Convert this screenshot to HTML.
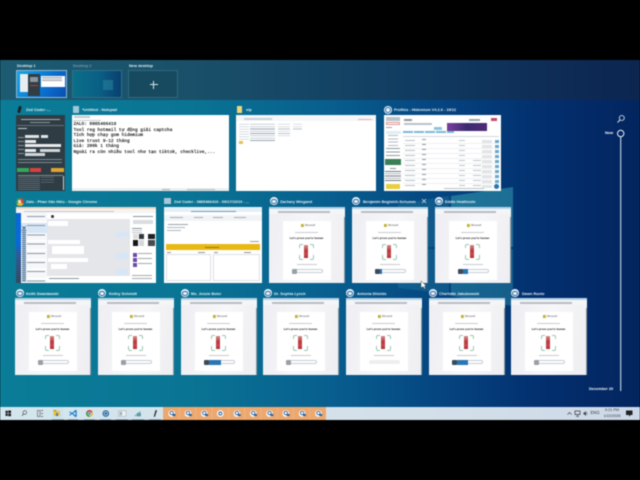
<!DOCTYPE html>
<html><head><meta charset="utf-8"><style>
html,body{margin:0;padding:0;background:#000;width:640px;height:480px;overflow:hidden}
#s{position:absolute;left:0;top:0;width:640px;height:480px;overflow:hidden;filter:blur(.4px);font-family:"Liberation Sans",sans-serif}
div,span,svg{position:absolute;display:block}
.l{color:#f0f8fb;font-size:3.900px;line-height:7px;white-space:nowrap;font-weight:bold;opacity:.95}
.t{background:#fff;overflow:hidden}
.ic{width:8px;height:8px;border-radius:50%;background:#eaf2f8}
.ic:after{content:"";position:absolute;left:1.300px;top:1.300px;width:3.800px;height:3.800px;border:.8px solid #27679f;border-radius:50%}
.bar{left:0;top:0;width:76px;height:2px;background:#b5d3e8}
.tb{left:0;top:2px;width:76px;height:5px;background:#f3f5f7;border-bottom:.5px solid #ddd}
.url{left:9px;top:3.500px;width:52px;height:2px;background:#b9bcc2}
.bg{left:0;top:7px;width:76px;height:70px;background:linear-gradient(100deg,#eeeef3,#f7f7f9 50%,#eeeef2)}
.sb{left:74.500px;top:10px;width:1.500px;height:67px;background:#8f9aa0}
.cd{left:13.500px;top:13.500px;width:48px;height:59px;background:#fff}
.ms{left:18px;top:3px;width:3.500px;height:3.500px;background:linear-gradient(90deg,#a2b838 50%,#e2b23a 50%)}
.mst{left:22.500px;top:3px;font-size:2.500px;line-height:3.500px;color:#555;white-space:nowrap}
.sub{left:12px;top:11.500px;width:23px;height:1px;background:#c9ccd0}
.h{left:0;width:48px;top:15px;text-align:center;font-size:2.800px;line-height:5px;color:#222;white-space:nowrap;font-weight:bold}
.f{left:16px;top:23px;width:15.500px;height:16px;border:1px solid #9cc9b2;border-radius:2px;box-sizing:border-box}
.f:before{content:"";position:absolute;left:3.500px;top:-1px;width:6.500px;height:16px;background:#fff}
.f:after{content:"";position:absolute;left:-1px;top:3.500px;width:15.500px;height:7px;background:#fff}
.fg{left:21.500px;top:24px;width:3.500px;height:13px;background:linear-gradient(#d88a8a,#b53a3f 45%,#c9484b 70%,#a33)}
.li{left:14px;top:43.500px;width:20px;height:1px;background:#c8cbd0}
.btn{left:9px;top:48px;width:31px;height:4.500px;border:.5px solid #c3cdd6;border-radius:3px;box-sizing:border-box;background:#fff}
.bi{left:-.5px;top:-.5px;width:5px;height:5px;background:#9a9fa5;border-radius:1px}
.bb{left:4px;top:-.5px;width:12px;height:4.500px;background:#2a76b5}
</style></head><body><div id="s">
<div style="left:0;top:60px;width:640px;height:360px;background:linear-gradient(90deg,#0a7d98 0%,#0a7494 30%,#085e8e 52%,#05437f 70%,#032f6e 85%,#03255e 100%)"></div>
<svg style="left:0;top:60px" width="640" height="360">
<polygon points="398,144 449,136 449,187 398,187" fill="#37a9b4" opacity=".2"/>
<polygon points="451,136 513,127 513,187 451,187" fill="#43bcc0" opacity=".42"/>
<polygon points="398,189 449,189 449,234 398,228" fill="#37a9b4" opacity=".2"/>
<polygon points="451,189 513,189 513,246 451,236" fill="#43bcc0" opacity=".3"/>
</svg>
<div style="left:0;top:60px;width:640px;height:40px;background:linear-gradient(90deg,#1c5c73 0%,#1a5069 30%,#123f63 60%,#0e2d57 85%,#0c2650 100%)"></div>

<!-- virtual desktops -->
<div class="l" style="left:17px;top:62px">Desktop 1</div>
<div class="l" style="left:73px;top:62px;opacity:.4">Desktop 2</div>
<div class="l" style="left:129px;top:62px">New desktop</div>
<div style="left:15.500px;top:69.500px;width:51px;height:28.500px;box-sizing:border-box;border:1px solid #8fb8d2;background:linear-gradient(120deg,#15a5e8,#0a6fd0 60%,#0a4eb0);overflow:hidden">
 <div style="left:3px;top:3px;width:19px;height:18px;background:#e8eef0"></div>
 <div style="left:24px;top:5px;width:24px;height:11px;background:#fff"></div>
 <div style="left:25px;top:6px;width:20px;height:4px;background:repeating-linear-gradient(#888 0 .5px,#fff .5px 1.200px)"></div>
 <div style="left:11px;top:3px;width:12px;height:22px;background:#2f3d45"></div>
 <div style="left:13px;top:14px;width:8px;height:1.500px;background:#b8403a"></div>
 <div style="left:13px;top:6px;width:8px;height:5px;background:#8c969c"></div>
</div>
<div style="left:72px;top:70px;width:50px;height:28px;box-sizing:border-box;border:.5px solid #2f6f88;background:linear-gradient(90deg,#0a6f88,#0a5f86 55%,#0a3f70)">
 <div style="left:30px;top:9px;width:10px;height:10px;background:#2a8aa0;opacity:.5"></div>
</div>
<div style="left:128px;top:70px;width:50px;height:28px;box-sizing:border-box;border:.5px solid #2e6a80;background:#174a5f">
 <div style="left:20.500px;top:13px;width:8px;height:1px;background:#d8e4e8"></div>
 <div style="left:24px;top:9.500px;width:1px;height:8px;background:#d8e4e8"></div>
</div>

<!-- ROW 1 labels -->
<div style="left:18px;top:106px;width:3px;height:7px;background:#222;transform:rotate(15deg);border-radius:1px"></div>
<div class="l" style="left:26px;top:106px">Zed Coder -...</div>
<div style="left:73px;top:106px;width:6px;height:6.500px;background:#9cc8d8"></div>
<div class="l" style="left:82px;top:106px">*Untitled - Notepad</div>
<div style="left:237px;top:106px;width:5px;height:6.500px;background:#f2d77a"></div>
<div class="l" style="left:246px;top:106px">vip</div>
<div class="ic" style="left:384px;top:105.500px"></div>
<div class="l" style="left:394px;top:106px">Profiles - Hidemium V4.2.6 - 19/12</div>

<!-- Zed coder dark -->
<div class="t" style="left:16px;top:115px;width:49px;height:76px;background:#2f3c44">
 <div style="left:5px;top:4px;width:39px;height:1px;background:#aab2b6"></div>
 <div style="left:14px;top:7px;width:20px;height:1px;background:#8d979c"></div>
 <div style="left:1px;top:10px;width:47px;height:.5px;background:#66727a"></div>
 <div style="left:2px;top:13px;width:9px;height:1px;background:#c4cace"></div>
 <div style="left:9px;top:20px;width:14px;height:3px;background:#dfe3e5"></div><div style="left:25px;top:20px;width:7px;height:3px;background:#dfe3e5"></div>
 <div style="left:9px;top:25px;width:11px;height:2.500px;background:#e8ecee"></div>
 <div style="left:9px;top:29px;width:36px;height:2.500px;background:#e8ecee"></div>
 <div style="left:9px;top:34px;width:11px;height:2.500px;background:#e8ecee"></div><div style="left:24px;top:34px;width:20px;height:2.500px;background:#d2d7da"></div>
 <div style="left:9px;top:38px;width:20px;height:2.500px;background:#d2d7da"></div>
 <div style="left:2px;top:22px;width:6px;height:18px;background:repeating-linear-gradient(#8a9499 0 1px,transparent 1px 4px)"></div>
 <div style="left:2px;top:44px;width:44px;height:5px;background:repeating-linear-gradient(#7f8a90 0 1px,transparent 1px 3px)"></div>
 <div style="left:1px;top:53px;width:12px;height:4px;background:#35a85a"></div>
 <div style="left:14px;top:53px;width:11px;height:4px;background:#d8413f"></div>
 <div style="left:35px;top:53px;width:13px;height:4px;background:#e0a52e"></div>
 <div style="left:2px;top:60px;width:45px;height:.5px;background:#7f8a90"></div>
 <div style="left:2px;top:62px;width:22px;height:13px;background:repeating-linear-gradient(#8b959b 0 .7px,transparent .7px 2px)"></div>
 <div style="left:25px;top:62px;width:13px;height:6px;background:repeating-linear-gradient(#7b858b 0 .7px,transparent .7px 2.500px)"></div>
 <div style="left:46.500px;top:61px;width:1.500px;height:14px;background:#cdd3d6"></div>
</div>

<!-- Notepad -->
<div class="t" style="left:72px;top:115px;width:157px;height:76px">
 <div style="left:2px;top:1px;width:16px;height:1.500px;background:#c3c8cc"></div>
 <div style="left:1px;top:4.500px;width:28px;height:1px;background:#c8ccd0"></div>
 <div style="left:1.500px;top:7.300px;font:4.470px/5.450px 'Liberation Mono','DejaVu Sans Mono',monospace;color:#000;-webkit-text-stroke:.12px #000;white-space:pre">ZALO: 0865466419
Tool reg hotmail tự động giải captcha
Tích hợp chạy gom hidemium
Live trust 9-12 tháng
Giá: 200k 1 tháng
Ngoài ra còn nhiều tool như tạo tiktok, checklive,...</div>
 <div style="left:0;top:72.500px;width:157px;height:3.500px;background:#f0f0f0"></div>
 <div style="left:90px;top:73.500px;width:8px;height:1.200px;background:#a9adb1"></div>
 <div style="left:115px;top:73.500px;width:28px;height:1.200px;background:#b5b9bd"></div>
</div>

<!-- Explorer -->
<div class="t" style="left:236px;top:115px;width:140px;height:76px">
 <div style="left:0;top:0;width:140px;height:6px;background:#f4f6f8"></div>
 <div style="left:8px;top:3px;width:28px;height:2px;background:#cad2da"></div>
 <div style="left:122px;top:4px;width:14px;height:1.200px;background:#e4b4b0"></div>
 <div style="left:3px;top:9px;width:10px;height:16px;background:repeating-linear-gradient(#b5c0c9 0 .7px,transparent .7px 2.500px)"></div>
 <div style="left:3px;top:26px;width:4px;height:3px;background:#e4c15a"></div>
 <div style="left:14px;top:9px;width:25px;height:17px;background:repeating-linear-gradient(#9aa8b3 0 .7px,transparent .7px 2.300px)"></div>
 <div style="left:42px;top:9px;width:12px;height:14px;background:repeating-linear-gradient(#bcc5cc 0 .7px,transparent .7px 2.300px)"></div>
 <div style="left:57px;top:9px;width:9px;height:6px;background:repeating-linear-gradient(#bcc5cc 0 .7px,transparent .7px 2.300px)"></div>
</div>

<!-- Hidemium -->
<div class="t" style="left:384px;top:115px;width:117px;height:76px">
 <div style="left:2px;top:2px;width:14px;height:4px;background:#b9c3ca"></div>
 <div style="left:2px;top:7px;width:14px;height:3px;border:.5px solid #d99;box-sizing:border-box"></div>
 <div style="left:2px;top:12px;width:6px;height:1px;background:#9aa7af"></div>
 <div style="left:2px;top:16px;width:15px;height:3px;background:#e0eef4"></div>
 <div style="left:4px;top:20px;width:10px;height:12px;background:repeating-linear-gradient(#b4bdc3 0 1px,transparent 1px 3.300px)"></div>
 <div style="left:2px;top:33px;width:14px;height:10px;background:repeating-linear-gradient(#8f9ca3 0 1px,transparent 1px 3.500px)"></div>
 <div style="left:1px;top:44px;width:16px;height:6px;background:#3a7f58"></div>
 <div style="left:6px;top:53px;width:6px;height:1px;background:#8a969d"></div>
 <div style="left:1px;top:56px;width:16px;height:11px;background:repeating-linear-gradient(#6f7c84 0 .8px,transparent .8px 2.300px)"></div>
 <div style="left:2px;top:69px;width:14px;height:5px;background:#e8cf3f"></div>
 <div style="left:20px;top:4px;width:8px;height:2px;background:#8d99a0"></div>
 <div style="left:20px;top:8px;width:28px;height:1.500px;background:#b8c2c8"></div>
 <div style="left:63px;top:8px;width:40px;height:8px;background:linear-gradient(90deg,#7a3fa0,#3b2a6e 50%,#4f2a78)"></div>
 <div style="left:85px;top:4px;width:11px;height:1.500px;background:#9ca7ad"></div>
 <div style="left:107px;top:3px;width:6px;height:3px;background:#c44b6a"></div>
 <div style="left:50px;top:12px;width:8px;height:2.500px;background:#8cc5e0"></div>
 <div style="left:19px;top:15.500px;width:51px;height:2.500px;background:repeating-linear-gradient(90deg,#7fb8d8 0 10px,#fff 10px 11px)"></div>
 <div style="left:19px;top:21px;width:96px;height:1px;background:#d4d9dd"></div>
 <div style="left:19px;top:24px;width:96px;height:49px;background:repeating-linear-gradient(#fff 0 4px,#eef0f2 4px 5px)"></div>
 <div style="left:21px;top:25px;width:10px;height:48px;background:repeating-linear-gradient(#b8c1c6 0 .8px,transparent .8px 5px)"></div>
 <div style="left:38px;top:24px;width:4px;height:50px;background:repeating-linear-gradient(#8f9da5 0 1.200px,transparent 1.200px 5px)"></div>
 <div style="left:75px;top:25px;width:6px;height:48px;background:repeating-linear-gradient(#bdc6cb 0 .8px,transparent .8px 5px)"></div>
 <div style="left:89px;top:45px;width:8px;height:28px;background:repeating-linear-gradient(#bdc6cb 0 .8px,transparent .8px 5px)"></div>
 <div style="left:98px;top:25px;width:10px;height:48px;background:repeating-linear-gradient(#e2e4e6 0 3px,transparent 3px 5px)"></div>
 <div style="left:111px;top:25px;width:4px;height:48px;background:repeating-linear-gradient(#6ba8cc 0 3px,transparent 3px 5px)"></div>
 <div style="left:60px;top:72.500px;width:40px;height:1px;background:#b8c0c5"></div>
 <div style="left:110px;top:69px;width:5px;height:5px;border-radius:50%;background:#2a76b5"></div>
</div>

<!-- ROW 2 labels -->
<div style="left:15.500px;top:197.500px;width:8px;height:8px;border-radius:50%;background:conic-gradient(#d9453a 0 33%,#e9b92c 33% 66%,#3c9a53 66%)"></div>
<div style="left:17.800px;top:199.800px;width:3.400px;height:3.400px;border-radius:50%;background:#4a8fd8;border:.4px solid #fff;box-sizing:border-box"></div>
<div class="l" style="left:26px;top:198px">Zalo - Phan Văn Hiếu - Google Chrome</div>
<div style="left:164px;top:198px;width:6.500px;height:6px;background:#a7c8d6"></div>
<div class="l" style="left:174px;top:198px">Zed Coder - 0865466419 - 09/17/10/10 - ...</div>
<div class="ic" style="left:269.500px;top:197.300px"></div><div class="l" style="left:280px;top:198px">Zachary Wiegand</div>
<div class="ic" style="left:352px;top:197.300px"></div><div class="l" style="left:363px;top:198px">Benjamin Bogisich-Schumm</div>
<div class="ic" style="left:435px;top:197.300px"></div><div class="l" style="left:445px;top:198px">Eddie Heathcote</div>
<svg style="left:421px;top:198px" width="6" height="6"><path d="M1 1 L5 5 M5 1 L1 5" stroke="#dfe9ef" stroke-width=".7"/></svg>

<!-- Zalo chrome -->
<div class="t" style="left:16px;top:207px;width:140px;height:76px">
 <div style="left:0;top:0;width:140px;height:2px;background:#ecd9c7"></div>
 <div style="left:0;top:2px;width:140px;height:4px;background:#f4f4f4"></div>
 <div style="left:8px;top:3.500px;width:90px;height:1.500px;background:#c4c7cb"></div>
 <div style="left:0;top:6px;width:5px;height:70px;background:linear-gradient(#0a68d8 0,#0a68d8 45%,#2e5b9a 60%,#34495e 100%)"></div>
 <div style="left:5px;top:6px;width:26px;height:70px;background:repeating-linear-gradient(#f5f7f9 0 8px,#fff 8px 9.500px)"></div>
 <div style="left:5px;top:16px;width:26px;height:10px;background:#d6e6f6"></div>
 <div style="left:6px;top:19px;width:4px;height:56px;background:repeating-radial-gradient(circle at 2px 2px,#5a7fa5 0 1.500px,#fff 1.500px 2px)"></div>
 <div style="left:11px;top:9px;width:18px;height:66px;background:repeating-linear-gradient(#8b98a5 0 1px,transparent 1px 9.200px)"></div>
 <div style="left:31px;top:6px;width:83px;height:70px;background:#e4e6e9"></div>
 <div style="left:31px;top:6px;width:83px;height:6px;background:#fff"></div>
 <div style="left:35px;top:7.500px;width:3px;height:3px;background:#333;border-radius:50%"></div>
 <div style="left:32px;top:14px;width:20px;height:5px;background:#fff"></div>
 <div style="left:32px;top:33px;width:32px;height:4px;background:#fff"></div>
 <div style="left:36px;top:39px;width:32px;height:8px;background:#fff"></div>
 <div style="left:32px;top:51px;width:40px;height:4px;background:#fff"></div>
 <div style="left:35px;top:57px;width:16px;height:5px;background:#fff"></div>
 <div style="left:100px;top:25px;width:13px;height:5px;background:#d7e6f7"></div>
 <div style="left:100px;top:46px;width:12px;height:6px;background:#d7e6f7"></div>
 <div style="left:100px;top:62px;width:12px;height:6px;background:#d7e6f7"></div>
 <div style="left:31px;top:69px;width:83px;height:7px;background:#fff"></div>
 <div style="left:33px;top:70.500px;width:30px;height:1px;background:#8d959c"></div>
 <div style="left:114px;top:6px;width:26px;height:70px;background:#fff"></div>
 <div style="left:117px;top:9px;width:20px;height:1px;background:#8d959c"></div>
 <div style="left:117px;top:13px;width:20px;height:4px;background:#d9dde0"></div>
 <div style="left:116px;top:21px;width:10px;height:5px;background:repeating-linear-gradient(#8b949b 0 .8px,transparent .8px 2.300px)"></div>
 <div style="left:117px;top:27px;width:5px;height:5px;background:#ddd"></div><div style="left:123px;top:27px;width:5px;height:5px;background:#30373d"></div><div style="left:132px;top:27px;width:7px;height:5px;background:#1d2226"></div>
 <div style="left:117px;top:33px;width:5px;height:6px;background:#151515"></div><div style="left:123px;top:33px;width:5px;height:6px;background:#d4d8db"></div><div style="left:132px;top:33px;width:7px;height:6px;background:#454b50"></div>
 <div style="left:117px;top:46px;width:4px;height:4px;background:#6d4aa8"></div>
 <div style="left:117px;top:51px;width:4px;height:4px;background:#6d4aa8"></div>
 <div style="left:117px;top:56px;width:4px;height:4px;background:#6d4aa8"></div>
 <div style="left:122px;top:46px;width:14px;height:14px;background:repeating-linear-gradient(#a4abb1 0 1px,transparent 1px 5px)"></div>
 <div style="left:116px;top:68px;width:20px;height:5px;background:repeating-linear-gradient(#a4abb1 0 1px,transparent 1px 3px)"></div>
</div>

<!-- Zed 2 -->
<div class="t" style="left:164px;top:207px;width:98px;height:76px">
 <div style="left:0;top:0;width:98px;height:5px;background:#e3f0f8"></div>
 <div style="left:27px;top:4px;width:45px;height:1px;background:#6d9ab8"></div>
 <div style="left:0;top:8px;width:98px;height:6px;background:#f1f4f6"></div>
 <div style="left:6px;top:10px;width:13px;height:1px;background:#a5adb3"></div>
 <div style="left:30px;top:10px;width:9px;height:1px;background:#a5adb3"></div>
 <div style="left:49px;top:10px;width:10px;height:1px;background:#a5adb3"></div>
 <div style="left:70px;top:10px;width:12px;height:1px;background:#a5adb3"></div>
 <div style="left:4px;top:17px;width:20px;height:1px;background:#9aa3a9"></div>
 <div style="left:3px;top:20px;width:18px;height:1px;background:#b2b9be"></div>
 <div style="left:3px;top:23px;width:14px;height:1px;background:#b2b9be"></div>
 <div style="left:86px;top:34px;width:9px;height:1px;background:#99a1a7"></div>
 <div style="left:2px;top:37px;width:94px;height:5.500px;background:#e9b812"></div>
 <div style="left:41px;top:39.500px;width:14px;height:1px;background:#8f7a2a"></div>
 <div style="left:2px;top:47px;width:45px;height:27px;border:.5px solid #dde1e4;box-sizing:border-box"></div>
 <div style="left:49px;top:47px;width:47px;height:27px;border:.5px solid #dde1e4;box-sizing:border-box"></div>
 <div style="left:3px;top:45px;width:4px;height:1px;background:#8d959b"></div>
 <div style="left:34px;top:45px;width:7px;height:1px;background:#8d959b"></div>
 <div style="left:50px;top:45px;width:4px;height:1px;background:#8d959b"></div>
 <div style="left:80px;top:45px;width:7px;height:1px;background:#8d959b"></div>
</div>

<!-- Microsoft thumbs -->
<div class="t" style="left:269px;top:207px;width:76px;height:76px"><div class="bar"></div><div class="tb"></div><div class="url"></div><div class="bg"></div><div class="sb"></div><div class="cd"><div class="ms"></div><div class="mst">Microsoft</div><div class="sub"></div><div class="h">Let's prove you're human</div><div class="f"></div><div class="fg"></div><div class="li"></div><div class="btn"><div class="bi"></div></div></div></div>
<div class="t" style="left:352px;top:207px;width:76px;height:76px"><div class="bar"></div><div class="tb"></div><div class="url"></div><div class="bg"></div><div class="sb"></div><div class="cd"><div class="ms"></div><div class="mst">Microsoft</div><div class="sub"></div><div class="h">Let's prove you're human</div><div class="f"></div><div class="fg"></div><div class="li"></div><div class="btn"><div class="bi" style="background:#3a4a58"></div><div class="bb" style="width:2px"></div></div></div></div>
<div class="t" style="left:435px;top:207px;width:76px;height:76px"><div class="bar"></div><div class="tb"></div><div class="url"></div><div class="bg"></div><div class="sb"></div><div class="cd"><div class="ms"></div><div class="mst">Microsoft</div><div class="sub"></div><div class="h">Let's prove you're human</div><div class="f"></div><div class="fg"></div><div class="li"></div><div class="btn"><div class="bi" style="background:#3a4a58"></div><div class="bb" style="width:5px"></div></div></div></div>

<!-- ROW 3 labels -->
<div class="ic" style="left:15.500px;top:289.300px"></div><div class="l" style="left:26px;top:289.800px">Keith Swaniawski</div>
<div class="ic" style="left:98px;top:289.300px"></div><div class="l" style="left:109px;top:289.800px">Kelley Schmidt</div>
<div class="ic" style="left:181px;top:289.300px"></div><div class="l" style="left:191px;top:289.800px">Ms. Jessie Beier</div>
<div class="ic" style="left:263.500px;top:289.300px"></div><div class="l" style="left:274px;top:289.800px">Dr. Sophia Lynch</div>
<div class="ic" style="left:346px;top:289.300px"></div><div class="l" style="left:357px;top:289.800px">Antonia Shields</div>
<div class="ic" style="left:429px;top:289.300px"></div><div class="l" style="left:439px;top:289.800px">Charlotte Jakubowski</div>
<div class="ic" style="left:511px;top:289.300px"></div><div class="l" style="left:522px;top:289.800px">Dawn Runte</div>

<div class="t" style="left:15px;top:298px;width:76px;height:77px"><div class="bar"></div><div class="tb"></div><div class="url"></div><div class="bg"></div><div class="sb"></div><div class="cd"><div class="ms"></div><div class="mst">Microsoft</div><div class="sub"></div><div class="h">Let's prove you're human</div><div class="f"></div><div class="fg"></div><div class="li"></div><div class="btn"><div class="bi"></div></div></div></div>
<div class="t" style="left:98px;top:298px;width:76px;height:77px"><div class="bar"></div><div class="tb"></div><div class="url"></div><div class="bg"></div><div class="sb"></div><div class="cd"><div class="ms"></div><div class="mst">Microsoft</div><div class="sub"></div><div class="h">Let's prove you're human</div><div class="f"></div><div class="fg"></div><div class="li"></div><div class="btn"><div class="bi"></div></div></div></div>
<div class="t" style="left:181px;top:298px;width:76px;height:77px"><div class="bar"></div><div class="tb"></div><div class="url"></div><div class="bg"></div><div class="sb"></div><div class="cd"><div class="ms"></div><div class="mst">Microsoft</div><div class="sub"></div><div class="h">Let's prove you're human</div><div class="f"></div><div class="fg"></div><div class="li"></div><div class="btn"><div class="bi" style="background:#3a4a58"></div><div class="bb"></div></div></div></div>
<div class="t" style="left:263px;top:298px;width:76px;height:77px"><div class="bar"></div><div class="tb"></div><div class="url"></div><div class="bg"></div><div class="sb"></div><div class="cd"><div class="ms"></div><div class="mst">Microsoft</div><div class="sub"></div><div class="h">Let's prove you're human</div><div class="f"></div><div class="fg"></div><div class="li"></div><div class="btn"><div class="bi"></div></div></div></div>
<div class="t" style="left:346px;top:298px;width:76px;height:77px"><div class="bar"></div><div class="tb"></div><div class="url"></div><div class="bg"></div><div class="sb"></div><div class="cd"><div class="ms"></div><div class="mst">Microsoft</div><div class="sub"></div><div class="h">Let's prove you're human</div><div class="f"></div><div class="fg"></div><div class="li"></div><div class="btn" style="background:#eee;border-color:#eee"></div></div></div>
<div class="t" style="left:429px;top:298px;width:76px;height:77px"><div class="bar"></div><div class="tb"></div><div class="url"></div><div class="bg"></div><div class="sb"></div><div class="cd"><div class="ms"></div><div class="mst">Microsoft</div><div class="sub"></div><div class="h">Let's prove you're human</div><div class="f"></div><div class="fg"></div><div class="li"></div><div class="btn"><div class="bi" style="background:#3a4a58"></div><div class="bb" style="width:11px"></div></div></div></div>
<div class="t" style="left:511px;top:298px;width:76px;height:77px"><div class="bar"></div><div class="tb"></div><div class="url"></div><div class="bg"></div><div class="sb"></div><div class="cd"><div class="ms"></div><div class="mst">Microsoft</div><div class="sub"></div><div class="h">Let's prove you're human</div><div class="f"></div><div class="fg"></div><div class="li"></div><div class="btn"><div class="bi"></div></div></div></div>

<!-- cursor -->
<svg style="left:420px;top:280px" width="8" height="10"><path d="M1 1 L1 8 L3 6.500 L4.500 9 L5.500 8.500 L4.500 6 L6.500 6 Z" fill="#fff" stroke="#222" stroke-width=".4"/></svg>

<!-- timeline -->
<svg style="left:600px;top:112px" width="40" height="282">
 <circle cx="21.800" cy="6" r="2.500" fill="none" stroke="#e4edf4" stroke-width=".8"/><path d="M20 8 L17.500 10.500" stroke="#e4edf4" stroke-width=".9"/>
 <path d="M20.700 25 V279" stroke="#dfe9f2" stroke-width="1"/>
 <circle cx="20.700" cy="21.500" r="3.200" fill="none" stroke="#e8f0f6" stroke-width="1"/>
</svg>
<div class="l" style="left:605px;top:129px;color:#fff;opacity:1">Now</div>
<div class="l" style="left:589px;top:384.500px;color:#fff;opacity:1">December 20</div>

<!-- taskbar -->
<div style="left:0;top:407px;width:640px;height:13px;background:linear-gradient(90deg,#d3e6ee,#d6e2ea 50%,#cdd9e8)"></div>
<svg style="left:0;top:407px" width="640" height="13">
 <g fill="#1c1c1c"><rect x="5.500" y="3.800" width="2.300" height="2.300"/><rect x="8.300" y="3.500" width="2.700" height="2.600"/><rect x="5.500" y="6.600" width="2.300" height="2.300"/><rect x="8.300" y="6.600" width="2.700" height="2.600"/></g>
 <circle cx="24.800" cy="5.500" r="1.800" fill="none" stroke="#444" stroke-width=".6"/><path d="M23.500 7 L22 8.800" stroke="#444" stroke-width=".7"/>
 <rect x="37.500" y="3.500" width="2.500" height="6" fill="none" stroke="#555" stroke-width=".6"/><path d="M41 3.500h2M41 6.500h2M41 9.500h2" stroke="#555" stroke-width=".8"/>
 <rect x="52" y="0" width="11" height="13" fill="#c8e0ec" opacity=".6"/><rect x="53.500" y="4" width="6.500" height="5" fill="#e8c24a"/><rect x="53.500" y="3" width="3" height="1.500" fill="#c79a2a"/><rect x="56" y="6" width="2" height="3" fill="#4a7fa5"/>
 <path d="M75.500 2.800 L71.500 6.500 L75.500 10.200 L76.700 9.500 V3.500 Z M73 6.500 L75.500 8.300 V4.700 Z" fill="#1a7fcf" fill-rule="evenodd"/><path d="M69.500 4.700 L72 6.500 L69.500 8.300" fill="none" stroke="#0f6fb8" stroke-width=".9"/>
 <circle cx="89.500" cy="6.500" r="3.400" fill="#e2b52f"/><path d="M89.500 6.500 L86.500 4.800 A3.400 3.400 0 0 1 92.500 4.800 Z" fill="#d4433a"/><path d="M89.500 6.500 L86.500 4.800 A3.400 3.400 0 0 0 89.500 9.900 Z" fill="#3a9a52"/><circle cx="89.500" cy="6.500" r="1.500" fill="#3a7fd0" stroke="#fff" stroke-width=".5"/>
 <circle cx="105.800" cy="6.500" r="3.300" fill="#27679f"/><circle cx="105.800" cy="6.500" r="1.700" fill="none" stroke="#e8f0f6" stroke-width=".6"/>
 <rect x="118.500" y="3.700" width="7.500" height="5.600" fill="#eef1f2" stroke="#8b969c" stroke-width=".4"/><rect x="119.500" y="4.800" width="2.600" height="3.500" fill="#9fb2ba"/>
 <path d="M134.500 8.500 L140.500 3.800 V9.300 H134.500 Z" fill="#7fb8bc"/><rect x="137" y="6" width="4" height="3.300" fill="#4f8c96" opacity=".7"/>
 <path d="M155.500 3 L157 3.500 L155 9.800 L153.700 9.800 Z" fill="#333"/>
 <g fill="#2a6fb5" opacity=".5"><rect x="52" y="12.300" width="12" height=".7"/><rect x="68" y="12.300" width="10" height=".7"/><rect x="84" y="12.300" width="11" height=".7"/><rect x="100" y="12.300" width="11" height=".7"/><rect x="116" y="12.300" width="12" height=".7"/><rect x="132" y="12.300" width="12" height=".7"/><rect x="149" y="12.300" width="12" height=".7"/></g>
 <rect x="163" y="0" width="163" height="13" fill="#eda870"/>
 <g stroke="#f5bd8b" stroke-width=".5"><path d="M179.500 0v13M195.800 0v13M212.100 0v13M228.400 0v13M244.700 0v13M261 0v13M277.300 0v13M293.600 0v13M309.900 0v13"/></g>
 <g fill="#fff"><circle cx="171.700" cy="6.500" r="3.300"/><circle cx="188" cy="6.500" r="3.300"/><circle cx="204.300" cy="6.500" r="3.300"/><circle cx="220.300" cy="6.500" r="3.300"/><circle cx="236.900" cy="6.500" r="3.300"/><circle cx="253.200" cy="6.500" r="3.300"/><circle cx="269.500" cy="6.500" r="3.300"/><circle cx="285.800" cy="6.500" r="3.300"/><circle cx="302.100" cy="6.500" r="3.300"/><circle cx="318.400" cy="6.500" r="3.300"/></g>
 <g fill="none" stroke="#2a5f96" stroke-width=".9"><circle cx="171.700" cy="6" r="1.700"/><circle cx="188" cy="6" r="1.700"/><circle cx="204.300" cy="6" r="1.700"/><circle cx="220.300" cy="6.500" r="1.500"/><circle cx="236.900" cy="6" r="1.700"/><circle cx="253.200" cy="6" r="1.700"/><circle cx="269.500" cy="6" r="1.700"/><circle cx="285.800" cy="6" r="1.700"/><circle cx="302.100" cy="6" r="1.700"/><circle cx="318.400" cy="6" r="1.700"/></g>
 <g fill="#2a5f96"><rect x="172.500" y="7" width="3" height="2"/><rect x="188.800" y="7" width="3" height="2"/><rect x="205.100" y="7" width="3" height="2"/><rect x="237.700" y="7" width="3" height="2"/><rect x="254" y="7" width="3" height="2"/><rect x="270.300" y="7" width="3" height="2"/><rect x="286.600" y="7" width="3" height="2"/><rect x="302.900" y="7" width="3" height="2"/><rect x="319.200" y="7" width="3" height="2"/></g>
 <path d="M567.500 7.500 L569.500 5.500 L571.500 7.500" fill="none" stroke="#444" stroke-width=".7"/>
 <rect x="575" y="4" width="5" height="3.500" fill="none" stroke="#333" stroke-width=".7"/><path d="M577.500 7.500v2M576 9.500h3" stroke="#333" stroke-width=".6"/>
 <path d="M583.500 5.500h1l1.500-1.500v5l-1.500-1.500h-1z" fill="#444"/><path d="M587 5v3" stroke="#555" stroke-width=".5"/>
 <path d="M626 3.500h6.500v4.500h-2l-1.500 1.700v-1.700h-3z" fill="#222"/>
</svg>
<div style="left:590.500px;top:410px;font-size:4.200px;line-height:6px;color:#333;white-space:nowrap">ENG</div>
<div style="left:603px;top:408.300px;width:18px;font-size:3.800px;line-height:5.200px;color:#333;text-align:center;white-space:nowrap">9:21 PM<br>1/22/2026</div>

<div style="left:0;top:0;width:640px;height:60px;background:#000"></div>
<div style="left:0;top:420px;width:640px;height:60px;background:#000"></div>
</div></body></html>
